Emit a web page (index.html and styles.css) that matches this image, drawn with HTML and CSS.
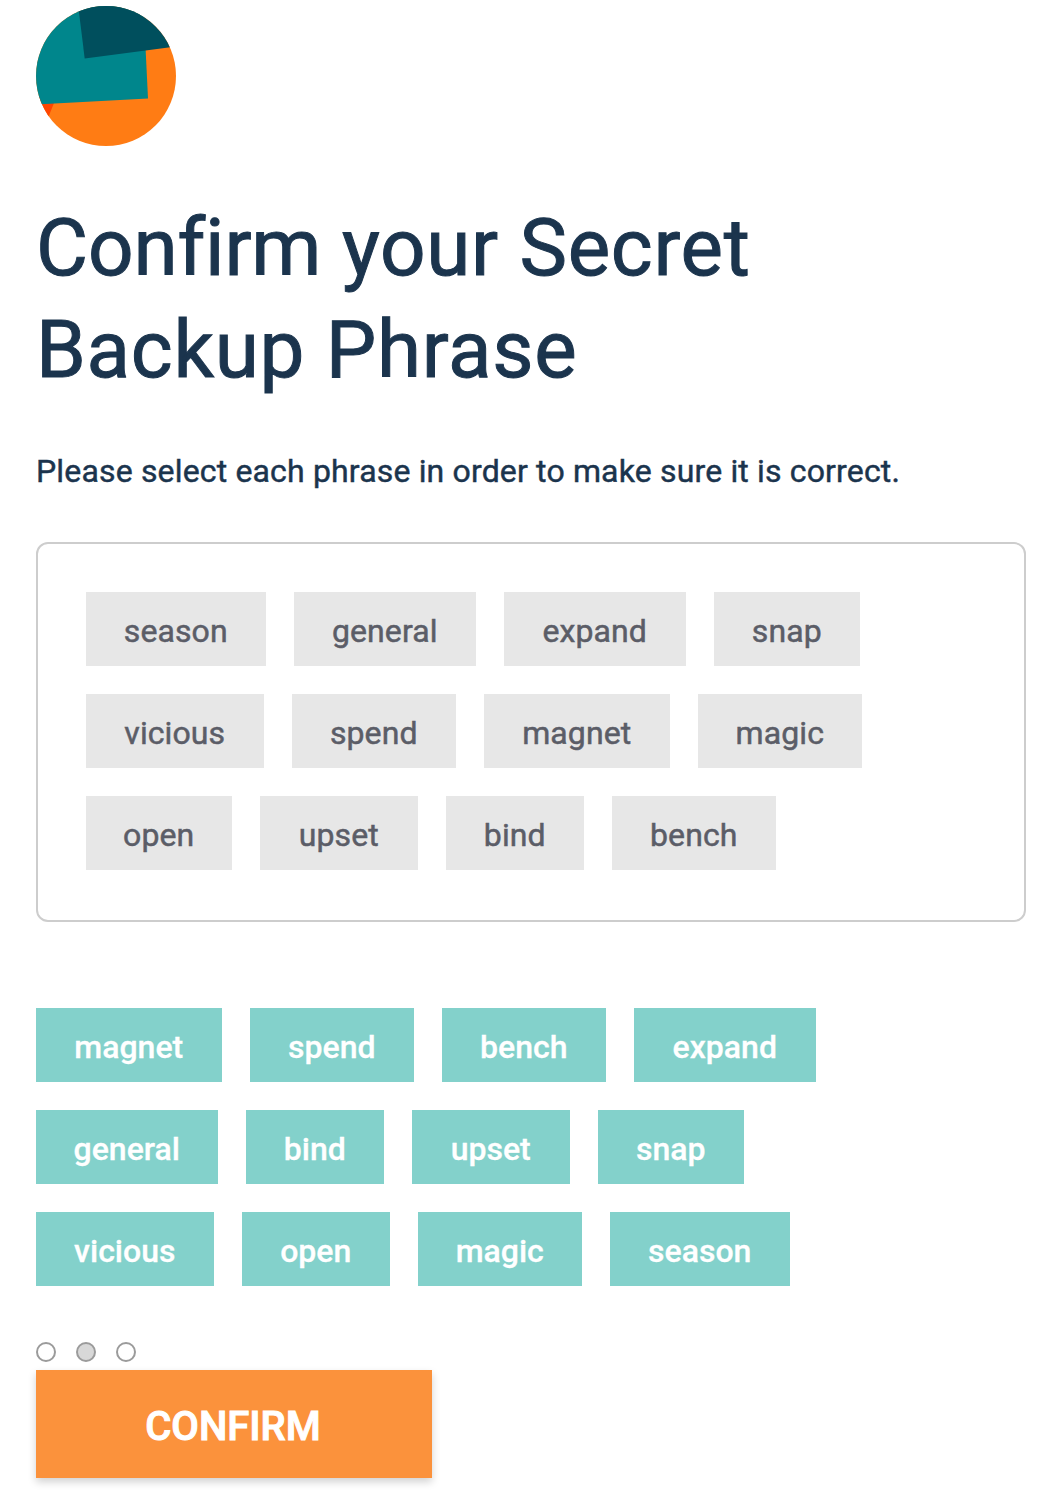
FILE: index.html
```html
<!DOCTYPE html>
<html lang="en">
<head>
<meta charset="utf-8">
<title>Confirm your Secret Backup Phrase</title>
<link rel="stylesheet" href="styles.css">
</head>
<body>
<main class="page">
  <svg class="avatar" viewBox="0 0 140 140" aria-hidden="true">
    <defs><clipPath id="round"><circle cx="70" cy="70" r="70"/></clipPath></defs>
    <g clip-path="url(#round)">
      <rect width="140" height="140" fill="#ff7c14"/>
      <path d="M0 90L20 92L12 112L0 120Z" fill="#ff4500"/>
      <path d="M0 0H107.500L112 92.500L0 98.500Z" fill="#00868c"/>
      <path d="M41 -10H140V40.500L48.700 52.500Z" fill="#004f5d"/>
    </g>
  </svg>
  <h1 class="title"><span class="tight">Confirm</span> your Secret<br>Backup Phrase</h1>
  <p class="hint">Please select each phrase in order to make sure it is correct.</p>
  <section class="selected">
    <div class="row"><span class="word w180">season</span><span class="word w182">general</span><span class="word w182">expand</span><span class="word w146">snap</span></div>
    <div class="row"><span class="word w178">vicious</span><span class="word w164">spend</span><span class="word w186">magnet</span><span class="word w164">magic</span></div>
    <div class="row"><span class="word w146">open</span><span class="word w158">upset</span><span class="word w138">bind</span><span class="word w164">bench</span></div>
  </section>
  <section class="choices">
    <div class="row"><button class="word w186">magnet</button><button class="word w164">spend</button><button class="word w164">bench</button><button class="word w182">expand</button></div>
    <div class="row"><button class="word w182">general</button><button class="word w138">bind</button><button class="word w158">upset</button><button class="word w146">snap</button></div>
    <div class="row"><button class="word w178">vicious</button><button class="word w148">open</button><button class="word w164">magic</button><button class="word w180">season</button></div>
  </section>
  <div class="steps"><i class="dot"></i><i class="dot active"></i><i class="dot"></i></div>
  <button class="confirm">CONFIRM</button>
</main>
</body>
</html>
```
FILE: styles.css
```css
* { box-sizing: border-box; }
body { margin: 0; background: #fff; font-family: Roboto, sans-serif; color: #1b344d; }
.page { height: 1500px; padding: 6px 26px 0 36px; overflow: hidden; }
.avatar { display: block; width: 140px; height: 140px; }
.title { margin: 51px 0 0; font-size: 80px; line-height: 102px; font-weight: 400; letter-spacing: .72px; -webkit-text-stroke: 1px #1b344d; }
.tight { letter-spacing: -.15px; font-variant-ligatures: none; }
.hint { margin: 49px 0 0; font-size: 32px; line-height: 42px; letter-spacing: .16px; -webkit-text-stroke: .45px #1b344d; }
.selected { display: flex; flex-direction: column; gap: 28px; height: 380px; margin-top: 50px; padding: 48px; border: 2px solid #cdcdcd; border-radius: 12px; }
.choices { display: flex; flex-direction: column; gap: 28px; margin-top: 86px; }
.row { display: flex; gap: 28px; }
.word { display: block; height: 74px; padding: 0; border: 0; background: #e7e7e7; color: #5b5d67; font: 400 32px/78px Roboto, sans-serif; letter-spacing: .1px; text-align: center; text-indent: -.5px; -webkit-text-stroke: .5px currentColor; }
.choices .word { background: #83d1cb; color: #fff; font-weight: 500; letter-spacing: 0; -webkit-text-stroke-width: .3px; }
.w138 { width: 138px; }
.w146 { width: 146px; }
.w148 { width: 148px; }
.w158 { width: 158px; }
.w164 { width: 164px; }
.w178 { width: 178px; }
.w180 { width: 180px; }
.w182 { width: 182px; }
.w186 { width: 186px; }
.steps { display: flex; gap: 20px; margin-top: 56px; }
.dot { width: 20px; height: 20px; border: 2px solid #9b9b9b; border-radius: 50%; }
.active { background: #d8d8d8; }
.confirm { display: block; width: 396px; height: 108px; margin-top: 8px; padding: 5px 0 0; border: 0; background: #fb923c; color: #fff; font: 500 40px/104px Roboto, sans-serif; text-indent: -2px; -webkit-text-stroke: 1px #fff; box-shadow: 0 4px 8px rgba(0, 0, 0, .18); }
```
